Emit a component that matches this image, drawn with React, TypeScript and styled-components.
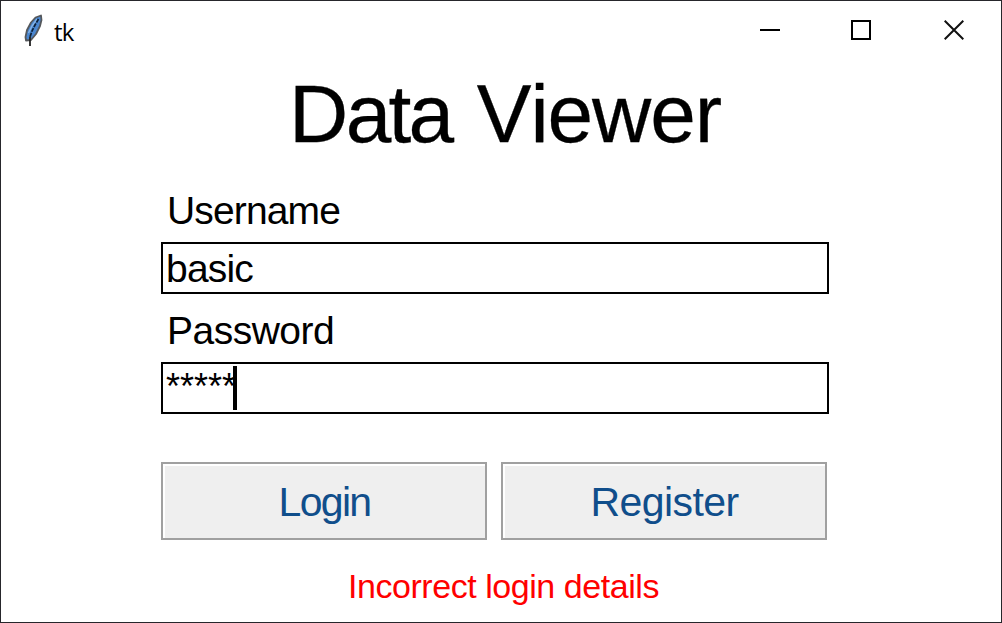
import React from 'react';
import styled, { createGlobalStyle } from 'styled-components';

const Global = createGlobalStyle`
  * { box-sizing: border-box; }
  body { margin: 0; background: #fff; overflow: hidden; font-family: "Liberation Sans", Arial, sans-serif; }
`;

const Window = styled.main`
  width: 1002px;
  height: 623px;
  border: 1px solid #26262b;
  background: #fff;
  color: #000;
  display: flex;
  flex-direction: column;
`;

const TitleBar = styled.header`
  height: 58px;
  display: flex;
  align-items: center;
  padding: 0 0 0 22px;
  flex: none;
`;

const Caption = styled.span`
  flex: 1;
  font: 24px/32px "Open Sans", "Noto Sans", sans-serif;
  padding: 3px 0 0 9px;
  letter-spacing: -0.8px;
`;

const WindowButton = styled.span<{ $width?: number }>`
  width: ${p => p.$width ?? 92}px;
  display: flex;
  justify-content: center;
  svg { display: block; }
`;

const Title = styled.h1`
  margin: 8px 0 0;
  padding-left: 8px;
  text-align: center;
  font-size: 82px;
  line-height: 93px;
  font-weight: 400;
  height: 93px;
  font-kerning: none;
  word-spacing: 2.5px;
  -webkit-text-stroke: 0.3px #000;
`;

const Word = styled.span<{ $tracking: number }>`
  letter-spacing: ${p => p.$tracking}px;
`;

const Form = styled.form`
  width: 668px;
  margin: 22px 0 0 160px;
  display: flex;
  flex-direction: column;
`;

const Label = styled.label<{ $tracking: number }>`
  height: 60px;
  padding-left: 6px;
  font-size: 39px;
  line-height: 58px;
  letter-spacing: ${p => p.$tracking}px;
`;

const Field = styled.div<{ $size: number; $tracking: number }>`
  height: 52px;
  margin-bottom: 8px;
  border: 2px solid #000;
  padding: 2px 3px;
  display: flex;
  font-size: ${p => p.$size}px;
  line-height: 45px;
  letter-spacing: ${p => p.$tracking}px;
`;

const Caret = styled.i`
  width: 4px;
  height: 44px;
  margin-left: -3px;
  background: #000;
`;

const Mask = styled.span`
  line-height: 42px;
`;

const Actions = styled.div`
  display: flex;
  gap: 14px;
  margin-top: 40px;
`;

const Action = styled.button<{ $tracking: number }>`
  width: 326px;
  height: 78px;
  border: 2px solid #a0a0a0;
  box-shadow: inset 2px 2px #fff;
  background: #efefef;
  color: #104e8b;
  font: 41px/46px "Liberation Sans", Arial, sans-serif;
  letter-spacing: ${p => p.$tracking}px;
  padding: 1px 0 0 1px;
`;

const ErrorText = styled.p`
  margin: 26px 0 0;
  padding-left: 5px;
  font-size: 34px;
  line-height: 40px;
  letter-spacing: -0.45px;
  color: #f00;
  text-align: center;
`;

const Feather = () => (
  <svg width="22" height="34" viewBox="0 0 22 34">
    <path d="M18 2.5 12.5 4.5 8 9.5 4 17 2.5 24 3 27.5 8 27 13 21 17 13 18.5 7Z" fill="#4a86cf" stroke="#55585c" strokeWidth="1.8" strokeLinejoin="round" />
    <path d="M14 6 9 13 5.5 20" fill="none" stroke="#86b4e6" strokeWidth="1.4" />
    <path d="M15.5 6 12 12 9 18 7 24" fill="none" stroke="#0d2038" strokeWidth="1.7" strokeDasharray="4 1.2" />
    <path d="M7 23.5V33" stroke="#222" strokeWidth="1.8" />
  </svg>
);

export default function App() {
  return (
    <>
      <Global />
      <Window>
        <TitleBar>
          <Feather />
          <Caption>tk</Caption>
          <WindowButton $width={90}>
            <svg width="20" height="20"><path d="M0 10h20" stroke="#000" strokeWidth="2" /></svg>
          </WindowButton>
          <WindowButton>
            <svg width="20" height="20"><path d="M1 1h18v18H1Z" fill="none" stroke="#000" strokeWidth="2" /></svg>
          </WindowButton>
          <WindowButton $width={94}>
            <svg width="20" height="20"><path d="m.7.7 18.6 18.6m0-18.6L.7 19.3" stroke="#111" strokeWidth="2" /></svg>
          </WindowButton>
        </TitleBar>
        <Title><Word $tracking={-2.7}>Data</Word> <Word $tracking={-1.1}>Viewer</Word></Title>
        <Form>
          <Label $tracking={-0.85}>Username</Label>
          <Field $size={39} $tracking={-0.8}>basic</Field>
          <Label $tracking={-0.5}>Password</Label>
          <Field $size={36} $tracking={0}><Mask>*****</Mask><Caret /></Field>
          <Actions>
            <Action type="button" $tracking={-1.7}>Login</Action>
            <Action type="button" $tracking={-0.6}>Register</Action>
          </Actions>
        </Form>
        <ErrorText>Incorrect login details</ErrorText>
      </Window>
    </>
  );
}
